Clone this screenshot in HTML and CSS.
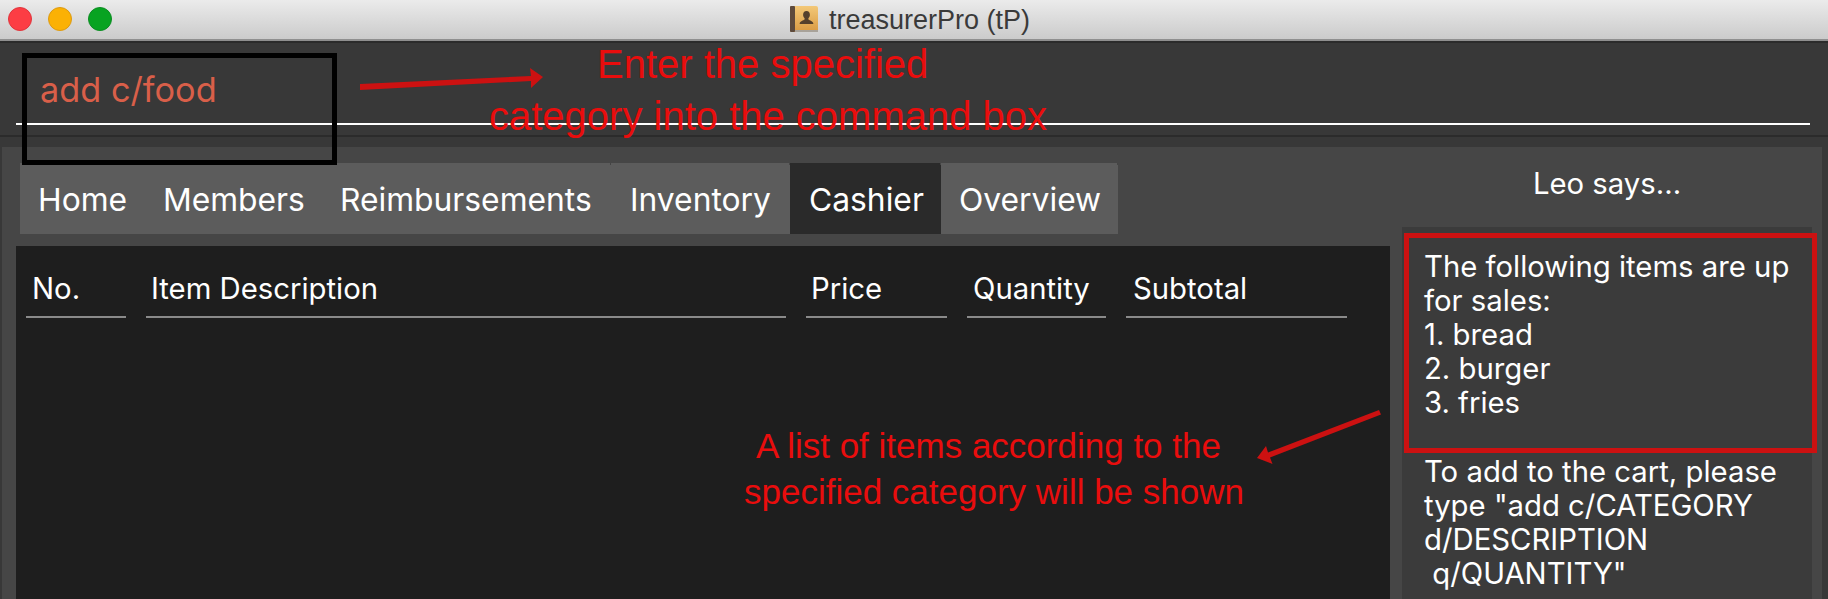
FILE: index.html
```html
<!DOCTYPE html>
<html>
<head>
    <title>treasurerPro (tP)</title>
    <link rel="stylesheet" href="styles.css">
</head>
<body>
    <!-- Window title bar -->
    <header class="titlebar">
        <div class="traffic">
            <span class="light light-red"></span>
            <span class="light light-yellow"></span>
            <span class="light light-green"></span>
        </div>
        <svg class="app-icon" width="28" height="26" viewBox="0 0 28 26">
            <defs>
                <linearGradient id="cover" x1="0" y1="0" x2="0" y2="1">
                    <stop offset="0" stop-color="#f3c878"/>
                    <stop offset="1" stop-color="#d99a42"/>
                </linearGradient>
            </defs>
            <rect x="0" y="0" width="28" height="26" rx="2" fill="url(#cover)"/>
            <rect x="0" y="0" width="5" height="26" rx="1" fill="#5d4a3c"/>
            <rect x="5" y="24" width="23" height="2" fill="#a8a299"/>
            <path d="M16.5 5c-2.2 0-3.4 1.7-3.4 3.8 0 1.5.6 2.800 1.500 3.500v1.300c-1.200 1-4.600 1.300-5 4.400h13.800c-.4-3.100-3.800-3.400-5-4.400v-1.300c.9-.7 1.500-2 1.500-3.500 0-2.100-1.200-3.800-3.400-3.800z" fill="#54402c"/>
        </svg>
        <span class="title-text">treasurerPro (tP)</span>
    </header>

    <!-- Command box -->
    <section class="command-bar">
        <div class="command-input">add c/food</div>
    </section>

    <main class="main-pane">
        <div class="left-pane">
            <nav class="tabs">
                <div class="tab tab-home">Home</div>
                <div class="tab tab-members">Members</div>
                <div class="tab tab-reimb">Reimbursements</div>
                <div class="tab tab-inventory">Inventory</div>
                <div class="tab tab-cashier">Cashier</div>
                <div class="tab tab-overview">Overview</div>
            </nav>
            <div class="table">
                <div class="table-head">
                    <div class="col col-no">No.</div>
                    <div class="col col-desc">Item Description</div>
                    <div class="col col-price">Price</div>
                    <div class="col col-qty">Quantity</div>
                    <div class="col col-sub">Subtotal</div>
                </div>
            </div>
        </div>
        <aside class="side-pane">
            <div class="side-title">Leo says...</div>
            <div class="side-box">The following items are up
for sales:
1. bread
2. burger
3. fries

To add to the cart, please
type "add c/CATEGORY
d/DESCRIPTION
 q/QUANTITY"</div>
        </aside>
    </main>

    <!-- Red and black annotations drawn over the screenshot -->
    <div class="mark mark-black"></div>
    <div class="mark mark-red"></div>
    <svg class="arrows" width="1828" height="599" viewBox="0 0 1828 599">
        <polygon points="360,84 531,76 530,68 543,77 531,88 531,81 360,90" fill="#cc1111"/>
        <polygon points="1379,410 1381,414.500 1270,457.500 1272.500,464 1257,458 1266,446 1268,452.500" fill="#cc1111"/>
    </svg>
    <div class="note note-1">Enter the specified</div>
    <div class="note note-2">category into the command box</div>
    <div class="note note-3">A list of items according to the</div>
    <div class="note note-4">specified category will be shown</div>
</body>
</html>
```

FILE: styles.css
```css
* {
    box-sizing: border-box;
}

html, body {
    margin: 0;
    height: 599px;
    overflow: hidden;
}

body {
    position: relative;
    display: flex;
    flex-direction: column;
    background-color: #383838;
    font-family: Inter, sans-serif;
    color: #fff;
}

/* Title bar */
.titlebar {
    position: relative;
    flex: none;
    height: 41px;
    padding-top: 6px;
    padding-left: 790px;
    display: flex;
    align-items: flex-start;
    background: linear-gradient(#ebebeb, #cbcbcb);
    border-bottom: 2px solid #8f8f8f;
}

.traffic {
    position: absolute;
    left: 8px;
    top: 7px;
    display: flex;
    gap: 16px;
}

.light {
    width: 24px;
    height: 24px;
    border-radius: 50%;
    border: 1px solid;
}

.light-red { background-color: #fc3d44; border-color: #e0353c; }
.light-yellow { background-color: #fbb104; border-color: #dc9a12; }
.light-green { background-color: #08a321; border-color: #0b8d22; }

.app-icon {
    flex: none;
}

.title-text {
    margin-left: 11px;
    font-family: "Liberation Sans", sans-serif;
    font-size: 27px;
    line-height: 28px;
    color: #3a3a3a;
}

/* Command box */
.command-bar {
    flex: none;
    height: 96px;
    padding: 0 18px 0 16px;
    background-color: #383838;
    border-top: 2px solid #2b2b2b;
    border-bottom: 2px solid #2b2b2b;
}

.command-input {
    height: 82px;
    padding: 24px 0 0 24px;
    border-bottom: 2px solid #fff;
    font-size: 34.3px;
    line-height: 45px;
    color: #d95f49;
}

/* Main area */
.main-pane {
    flex: 1;
    margin: 10px 6px 0 2px;
    display: flex;
    background-color: #464646;
}

.left-pane {
    flex: none;
    width: 1388px;
    padding-top: 16px;
}

.tabs {
    margin-left: 18px;
    display: flex;
    height: 71px;
}

.tab {
    position: relative;
    padding-left: 18px;
    font-size: 31.8px;
    line-height: 73px;
    background-color: #5c5c5c;
}

.tab::after {
    content: "";
    position: absolute;
    top: 0;
    right: 0;
    width: 1px;
    height: 2px;
    background-color: #444;
}

.tab-home { width: 123px; }
.tab-members { width: 177px; padding-left: 20px; }
.tab-reimb { width: 291px; padding-left: 20px; }
.tab-inventory { width: 179px; padding-left: 19px; }
.tab-cashier { width: 151px; padding-left: 19px; background-color: #2a2a2a; }
.tab-overview { width: 177px; }

.table {
    margin-top: 12px;
    margin-left: 14px;
    height: 353px;
    padding: 23px 0 0 10px;
    background-color: #1e1e1e;
}

.table-head {
    display: flex;
}

.col {
    height: 49px;
    padding-left: 6px;
    font-size: 29.3px;
    line-height: 39px;
    border-bottom: 2px solid #8a8a8a;
}

.col-no { width: 100px; }
.col-desc { width: 640px; margin-left: 20px; padding-left: 5px; }
.col-price { width: 141px; margin-left: 20px; padding-left: 5px; }
.col-qty { width: 139px; margin-left: 20px; }
.col-sub { width: 221px; margin-left: 20px; padding-left: 7px; }

/* Leo's side panel */
.side-pane {
    flex: 1;
    padding: 0 10px 0 12px;
    display: flex;
    flex-direction: column;
}

.side-title {
    flex: none;
    height: 80px;
    padding-bottom: 8px;
    display: flex;
    align-items: center;
    justify-content: center;
    font-size: 29.3px;
}

.side-box {
    flex: 1;
    padding: 23px 0 0 22px;
    background-color: #3b3b3b;
    font-size: 29.3px;
    line-height: 34.1px;
    white-space: pre-wrap;
}

/* Annotations */
.mark {
    position: absolute;
    border-style: solid;
    border-width: 5px;
}

.mark-black {
    left: 22px;
    top: 53px;
    width: 315px;
    height: 112px;
    border-color: #000;
}

.mark-red {
    left: 1404px;
    top: 233px;
    width: 413px;
    height: 220px;
    border-color: #cc1111;
}

.arrows {
    position: absolute;
    left: 0;
    top: 0;
}

.note {
    position: absolute;
    font-family: "Liberation Sans", sans-serif;
    color: #e90d0d;
    white-space: nowrap;
}

.note-1 { left: 597px; top: 42px; font-size: 40px; line-height: 44px; }
.note-2 { left: 489px; top: 94px; font-size: 40px; line-height: 44px; }
.note-3 { left: 756px; top: 424px; font-size: 35px; line-height: 44px; }
.note-4 { left: 744px; top: 470px; font-size: 35px; line-height: 44px; }
```
